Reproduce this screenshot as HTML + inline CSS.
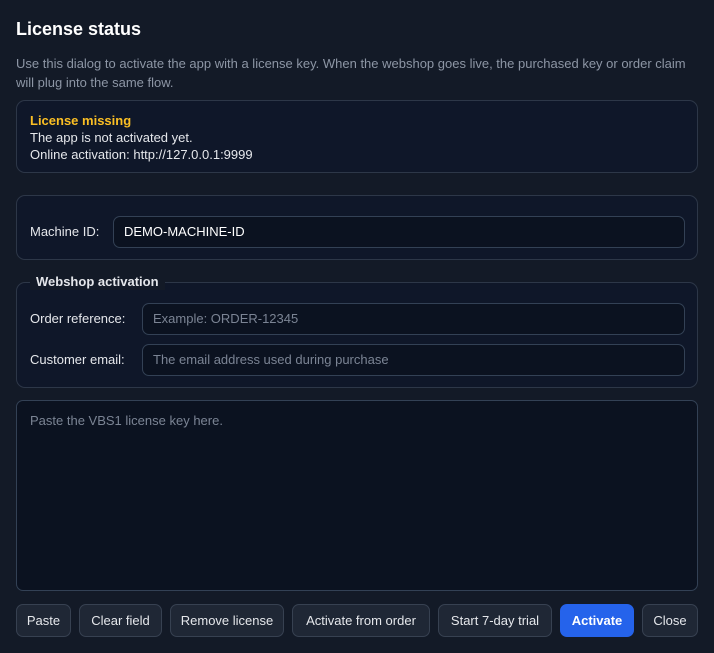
<!DOCTYPE html>
<html><head><meta charset="utf-8"><style>
*{box-sizing:border-box;margin:0;padding:0}
body{width:714px;height:653px;background:#131a27;font-family:"Liberation Sans","DejaVu Sans",sans-serif;font-size:13px;color:#e5e7eb;position:relative;overflow:hidden}
.a{position:absolute}
.box{position:absolute;border:1px solid #2d3748;border-radius:9px;background:#0f1729}
.inp{position:absolute;border:1px solid #334155;border-radius:7px;background:#0b1220;padding-left:10px;line-height:30px}
.ph{color:#7b8494}
.btn{position:absolute;top:604px;height:33px;border:1px solid #374151;border-radius:7px;background:#1f2735;color:#e5e7eb;text-align:center;line-height:31px}
</style></head><body>
<div class="a" style="left:16px;top:19px;font-size:18px;font-weight:bold;color:#fff">License status</div>
<div class="a" style="left:16px;top:54px;color:#8d96a5;line-height:19px;width:690px">Use this dialog to activate the app with a license key. When the webshop goes live, the purchased key or order claim will plug into the same flow.</div>
<div class="box" style="left:16px;top:100px;width:682px;height:73px"></div>
<div class="a" style="left:30px;top:112px;line-height:17px">
<div style="color:#fbbf24;font-weight:bold">License missing</div>
<div>The app is not activated yet.</div>
<div>Online activation: http://127.0.0.1:9999</div></div>
<div class="box" style="left:16px;top:195px;width:682px;height:65px"></div>
<div class="a" style="left:30px;top:224px">Machine ID:</div>
<div class="inp" style="left:113px;top:216px;width:572px;height:32px;color:#fff">DEMO-MACHINE-ID</div>
<div class="box" style="left:16px;top:282px;width:682px;height:106px"></div>
<div class="a" style="left:30px;top:273px;padding:0 6px;background:#131a27;font-weight:bold;line-height:17px">Webshop activation</div>
<div class="a" style="left:30px;top:311px">Order reference:</div>
<div class="inp ph" style="left:142px;top:303px;width:543px;height:32px">Example: ORDER-12345</div>
<div class="a" style="left:30px;top:352px">Customer email:</div>
<div class="inp ph" style="left:142px;top:344px;width:543px;height:32px">The email address used during purchase</div>
<div class="inp ph" style="left:16px;top:400px;width:682px;height:191px;padding-left:13px;line-height:40px;background:#0b1220">Paste the VBS1 license key here.</div>
<div class="btn" style="left:16px;width:55px">Paste</div>
<div class="btn" style="left:79px;width:83px">Clear field</div>
<div class="btn" style="left:170px;width:114px">Remove license</div>
<div class="btn" style="left:292px;width:138px">Activate from order</div>
<div class="btn" style="left:438px;width:114px">Start 7-day trial</div>
<div class="btn" style="left:560px;width:74px;background:#2563eb;border-color:#2563eb;color:#fff;font-weight:bold">Activate</div>
<div class="btn" style="left:642px;width:56px">Close</div>
</body></html>
